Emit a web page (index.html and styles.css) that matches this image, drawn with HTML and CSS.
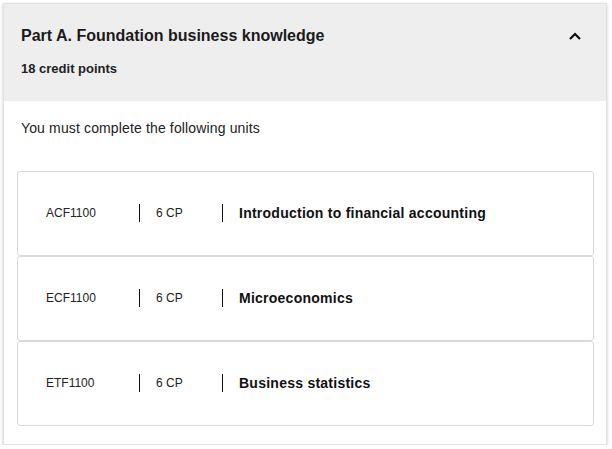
FILE: index.html
```html
<!DOCTYPE html>
<html>
<head>
<meta charset="utf-8">
<link rel="stylesheet" href="styles.css">
</head>
<body>
<section class="card">
  <header class="card-head">
    <div class="head-text">
      <h2 class="title">Part A. Foundation business knowledge</h2>
      <p class="credits">18 credit points</p>
    </div>
    <svg class="chevron" width="14" height="10" viewBox="0 0 14 10"><path d="M2 8 L7 3 L12 8" fill="none" stroke="#111" stroke-width="2.2"/></svg>
  </header>
  <div class="card-body">
    <p class="intro">You must complete the following units</p>
    <ul class="units">
      <li class="unit"><span class="code">ACF1100</span><span class="cp">6 CP</span><span class="name">Introduction to financial accounting</span></li>
      <li class="unit"><span class="code">ECF1100</span><span class="cp">6 CP</span><span class="name">Microeconomics</span></li>
      <li class="unit"><span class="code">ETF1100</span><span class="cp">6 CP</span><span class="name">Business statistics</span></li>
    </ul>
  </div>
</section>
</body>
</html>
```
FILE: styles.css
```css
* { box-sizing: border-box; }
body {
  margin: 0;
  background: #fff;
  font-family: "Liberation Sans", Arial, sans-serif;
  color: #222;
}
.card {
  margin: 3px 5px 0 3px;
  background: #fff;
  border: 1px solid #e2e2e2;
  box-shadow: 0 1px 3px rgba(0,0,0,0.22);
}
.card-head {
  background: #eeeeee;
  display: flex;
  justify-content: space-between;
  align-items: flex-start;
  padding: 21px 24px 22px 17px;
  height: 97px;
}
.title {
  margin: 0;
  font-size: 16px;
  line-height: 22px;
  font-weight: bold;
  color: #1b1b1b;
}
.credits {
  margin: 13px 0 0;
  font-size: 13px;
  line-height: 18px;
  font-weight: bold;
  color: #222;
}
.chevron { margin-top: 6px; }
.card-body {
  padding: 17px 12px 18px 13px;
}
.intro {
  margin: 0 0 0 4px;
  font-size: 14px;
  line-height: 20px;
  letter-spacing: 0.14px;
  color: #222;
}
.units {
  list-style: none;
  margin: 33px 0 0;
  padding: 0;
}
.unit {
  display: flex;
  align-items: center;
  height: 85px;
  border: 1px solid #d9d9d9;
  border-radius: 3px;
  padding-left: 28px;
  padding-bottom: 1px;
  font-size: 12px;
  color: #222;
}
.code {
  width: 93px;
  line-height: 18px;
}
.cp {
  width: 83px;
  padding-left: 16px;
  border-left: 1.5px solid #111;
  line-height: 18px;
}
.name {
  padding-left: 16px;
  border-left: 1.5px solid #111;
  line-height: 18px;
  font-size: 14px;
  font-weight: bold;
  letter-spacing: 0.25px;
  color: #111;
}
```
